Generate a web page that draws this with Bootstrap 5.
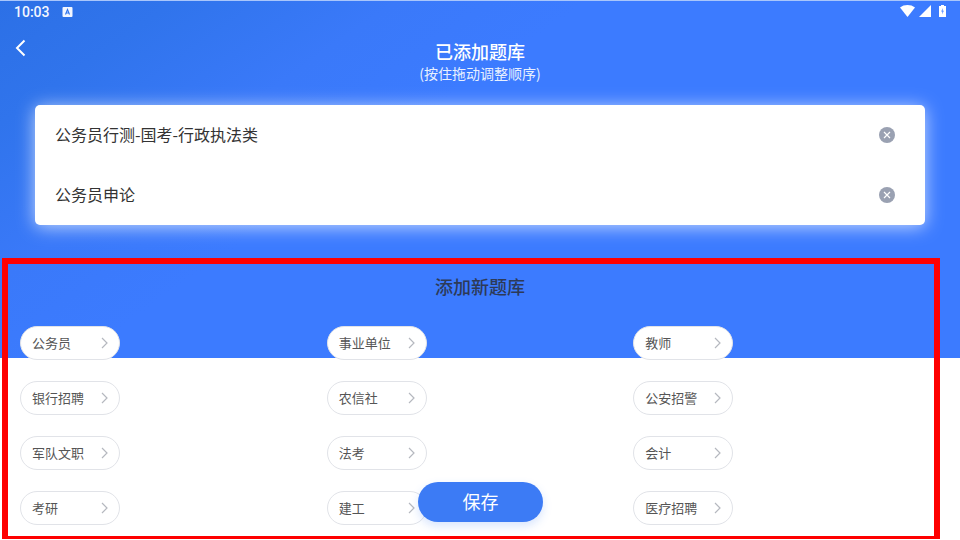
<!DOCTYPE html>
<html lang="zh-CN">
<head>
  <meta charset="UTF-8">
  <meta name="viewport" content="width=device-width, initial-scale=1">
  <title>已添加题库</title>
  <link href="https://cdn.jsdelivr.net/npm/bootstrap@5.3.3/dist/css/bootstrap.min.css" rel="stylesheet">
  <style>
    html, body { width: 960px; height: 540px; overflow: hidden; }
    body { font-family: "Noto Sans CJK SC", "Roboto", sans-serif; color: #333; background: #fff; }
    .screen { width: 960px; height: 540px; }
    .top-area { height: 358px; padding-top: 1px; border-top: 1px solid #a9c6fb; background: linear-gradient(145deg, #2c70e6 0%, #3074ec 12%, #3a79f9 27%, #3c7bff 40%); margin-bottom: -32px; }
    .status-row { height: 20px; padding: 0 14px; color: #f2f6ff; font-family: "Roboto", sans-serif; font-size: 14px; line-height: 20px; font-weight: 500; }
    .status-icons { margin-top: -2px; }
    .head-row { height: 83px; }
    .back-btn { left: 15px; top: 17px; }
    .page-title { font-size: 18px; line-height: 24px; font-weight: 500; color: #fff; padding-top: 17px; }
    .page-sub { font-size: 14px; line-height: 20px; color: #e8f0ff; }
    .added-box { margin: 0 35px; height: 120px; border-radius: 5px; background: #fff; box-shadow: 0 2px 18px rgba(255,255,255,.7); }
    .added-item { height: 60px; padding: 0 30px 0 20px; font-size: 16px; color: #333; }
    .added-name { margin-top: -2px; }
    .new-title { font-size: 18px; font-weight: 500; line-height: 24px; color: #2d3a57; padding-top: 49px; }
    .chip-grid { padding: 0 20px; row-gap: 21px; display: grid; grid-template-columns: repeat(3, 1fr); }
    .chip { width: 100px; height: 34px; border: 1px solid #e1e3e8; border-radius: 17px; background: #fff; padding: 0 11px; font-size: 13px; color: #555; }
    .save-btn { left: 418px; top: 482px; width: 125px; height: 40px; border-radius: 20px; background: #3c7bf5; color: #fff; font-size: 18px; padding-bottom: 2px !important; box-shadow: 0 4px 10px rgba(60,123,245,.2); }
    .red-frame { left: 2px; top: 258px; width: 938px; height: 281px; border: 6px solid #fe0000; border-bottom-width: 3px; pointer-events: none; }
  </style>
</head>
<body>
  <script src="https://cdn.jsdelivr.net/npm/bootstrap@5.3.3/dist/js/bootstrap.bundle.min.js"></script>

  <div class="screen position-relative overflow-hidden">
    <div class="top-area">
      <div class="status-row d-flex align-items-center">
        <span>10:03</span>
        <svg class="ms-2 ps-1" width="15" height="10" viewBox="0 0 10 10"><rect width="10" height="10" rx="1" fill="#f2f6ff"/><path d="M3 7.500 5 2.500 7 7.500M3.800 6h2.400" fill="none" stroke="#3074ec" stroke-width="1.100"/></svg>
        <span class="status-icons ms-auto d-flex align-items-center">
          <svg width="15" height="12" viewBox="0 0 15 12"><path d="M0 2.500C4.200-.8 10.800-.8 15 2.500L7.500 12Z" fill="#fff"/></svg>
          <svg class="ms-1" width="12" height="12" viewBox="0 0 12 12"><path d="M12 0V12H0Z" fill="#fff"/></svg>
          <svg class="ms-2" width="7" height="12" viewBox="0 0 7 12"><path d="M2 0H5V1H7V12H0V1H2Z" fill="#fff"/><path d="M4 3 2.200 6.500H3.500L3 9.500 4.800 5.800H3.500Z" fill="#3c7bff"/></svg>
        </span>
      </div>

      <div class="head-row position-relative text-center">
        <svg class="back-btn position-absolute" width="11" height="18" viewBox="0 0 11 18"><path d="M9.500 1.500 2 9l7.500 7.500" fill="none" stroke="#fff" stroke-width="2"/></svg>
        <div class="page-title">已添加题库</div>
        <div class="page-sub">(按住拖动调整顺序)</div>
      </div>

      <div class="added-box">
        <div class="added-item d-flex align-items-center justify-content-between">
          <span class="added-name">公务员行测-国考-行政执法类</span>
          <svg width="16" height="16" viewBox="0 0 16 16"><circle cx="8" cy="8" r="8" fill="#9aa1b2"/><path d="M5 5l6 6M11 5l-6 6" stroke="#fff" stroke-width="1.200"/></svg>
        </div>
        <div class="added-item d-flex align-items-center justify-content-between">
          <span class="added-name">公务员申论</span>
          <svg width="16" height="16" viewBox="0 0 16 16"><circle cx="8" cy="8" r="8" fill="#9aa1b2"/><path d="M5 5l6 6M11 5l-6 6" stroke="#fff" stroke-width="1.200"/></svg>
        </div>
      </div>
      <div class="new-title text-center">添加新题库</div>
    </div>

    <div class="chip-grid position-relative" id="chips"></div>

    <button type="button" class="btn save-btn position-absolute d-flex align-items-center justify-content-center border-0 p-0">保存</button>
    <div class="red-frame position-absolute"></div>
  </div>

  <script>
    const names = ['公务员', '事业单位', '教师', '银行招聘', '农信社', '公安招警', '军队文职', '法考', '会计', '考研', '建工', '医疗招聘'];
    const grid = document.getElementById('chips');
    names.forEach(name => {
      let cell = document.createElement('div');
      cell.innerHTML = `
        <div class="chip d-flex align-items-center justify-content-between">
          <span>${name}</span>
          <svg width="7" height="12" viewBox="0 0 7 12"><path d="M1 1l5 5-5 5" fill="none" stroke="#b5b8bf" stroke-width="1.200"/></svg>
        </div>`;
      grid.appendChild(cell);
    });
  </script>
</body>
</html>
